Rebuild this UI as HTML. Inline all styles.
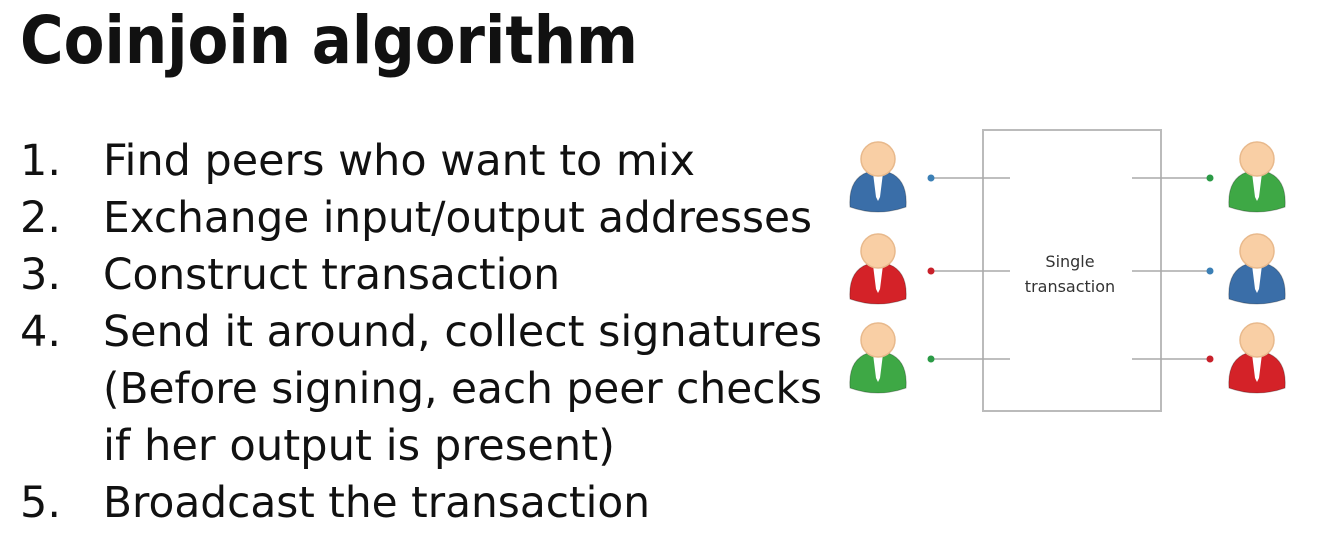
<!DOCTYPE html>
<html><head><meta charset="utf-8"><style>
html,body{margin:0;padding:0;background:#fff;}
svg{display:block;}
</style></head><body>
<svg width="1319" height="541" viewBox="0 0 1319 541" xmlns="http://www.w3.org/2000/svg">
<defs>
<g id="p">
  <path d="M-28,48 Q-30,20 -10,13 L10,13 Q30,20 28,48 Q0,58 -28,48 Z" stroke="rgba(0,0,0,0.25)" stroke-width="1"/>
  <path d="M-5,14 L5,14 L2,38 L0,42 L-2,38 Z" fill="#fff"/>
  <circle cx="0" cy="0" r="17" fill="#f9cfa5" stroke="#e8b98c" stroke-width="1.5"/>
</g>
</defs>
<g font-family="'DejaVu Sans','Liberation Sans',sans-serif" fill="#111">
<text x="20" y="63" font-size="66" font-weight="bold" textLength="618" lengthAdjust="spacingAndGlyphs">Coinjoin algorithm</text>
<g font-size="43">
<text x="20" y="175">1.</text>
<text x="103" y="175" textLength="592" lengthAdjust="spacingAndGlyphs">Find peers who want to mix</text>
<text x="20" y="232">2.</text>
<text x="103" y="232" textLength="709" lengthAdjust="spacingAndGlyphs">Exchange input/output addresses</text>
<text x="20" y="289">3.</text>
<text x="103" y="289" textLength="457" lengthAdjust="spacingAndGlyphs">Construct transaction</text>
<text x="20" y="346">4.</text>
<text x="103" y="346" textLength="719" lengthAdjust="spacingAndGlyphs">Send it around, collect signatures</text>
<text x="103" y="403" textLength="719" lengthAdjust="spacingAndGlyphs">(Before signing, each peer checks</text>
<text x="103" y="460" textLength="512" lengthAdjust="spacingAndGlyphs">if her output is present)</text>
<text x="20" y="517">5.</text>
<text x="103" y="517" textLength="547" lengthAdjust="spacingAndGlyphs">Broadcast the transaction</text>
</g>
</g>
<rect x="983" y="130" width="178" height="281" fill="none" stroke="#bbb" stroke-width="2"/>
<g stroke="#aaa" stroke-width="1.5">
<line x1="931" y1="178" x2="1010" y2="178"/><line x1="931" y1="271" x2="1010" y2="271"/><line x1="931" y1="359" x2="1010" y2="359"/>
<line x1="1132" y1="178" x2="1210" y2="178"/><line x1="1132" y1="271" x2="1210" y2="271"/><line x1="1132" y1="359" x2="1210" y2="359"/>
</g>
<circle cx="931" cy="178" r="3.5" fill="#3b7fb5"/><circle cx="931" cy="271" r="3.5" fill="#c8202a"/><circle cx="931" cy="359" r="3.5" fill="#2a9a45"/>
<circle cx="1210" cy="178" r="3.5" fill="#2a9a45"/><circle cx="1210" cy="271" r="3.5" fill="#3b7fb5"/><circle cx="1210" cy="359" r="3.5" fill="#c8202a"/>
<g font-family="'DejaVu Sans','Liberation Sans',sans-serif" font-size="16" fill="#333" text-anchor="middle">
<text x="1070" y="267">Single</text><text x="1070" y="292">transaction</text>
</g>
<use href="#p" x="878" y="159" fill="#3a6ea8"/>
<use href="#p" x="878" y="251" fill="#d42228"/>
<use href="#p" x="878" y="340" fill="#3ea845"/>
<use href="#p" x="1257" y="159" fill="#3ea845"/>
<use href="#p" x="1257" y="251" fill="#3a6ea8"/>
<use href="#p" x="1257" y="340" fill="#d42228"/>
</svg>
</body></html>
